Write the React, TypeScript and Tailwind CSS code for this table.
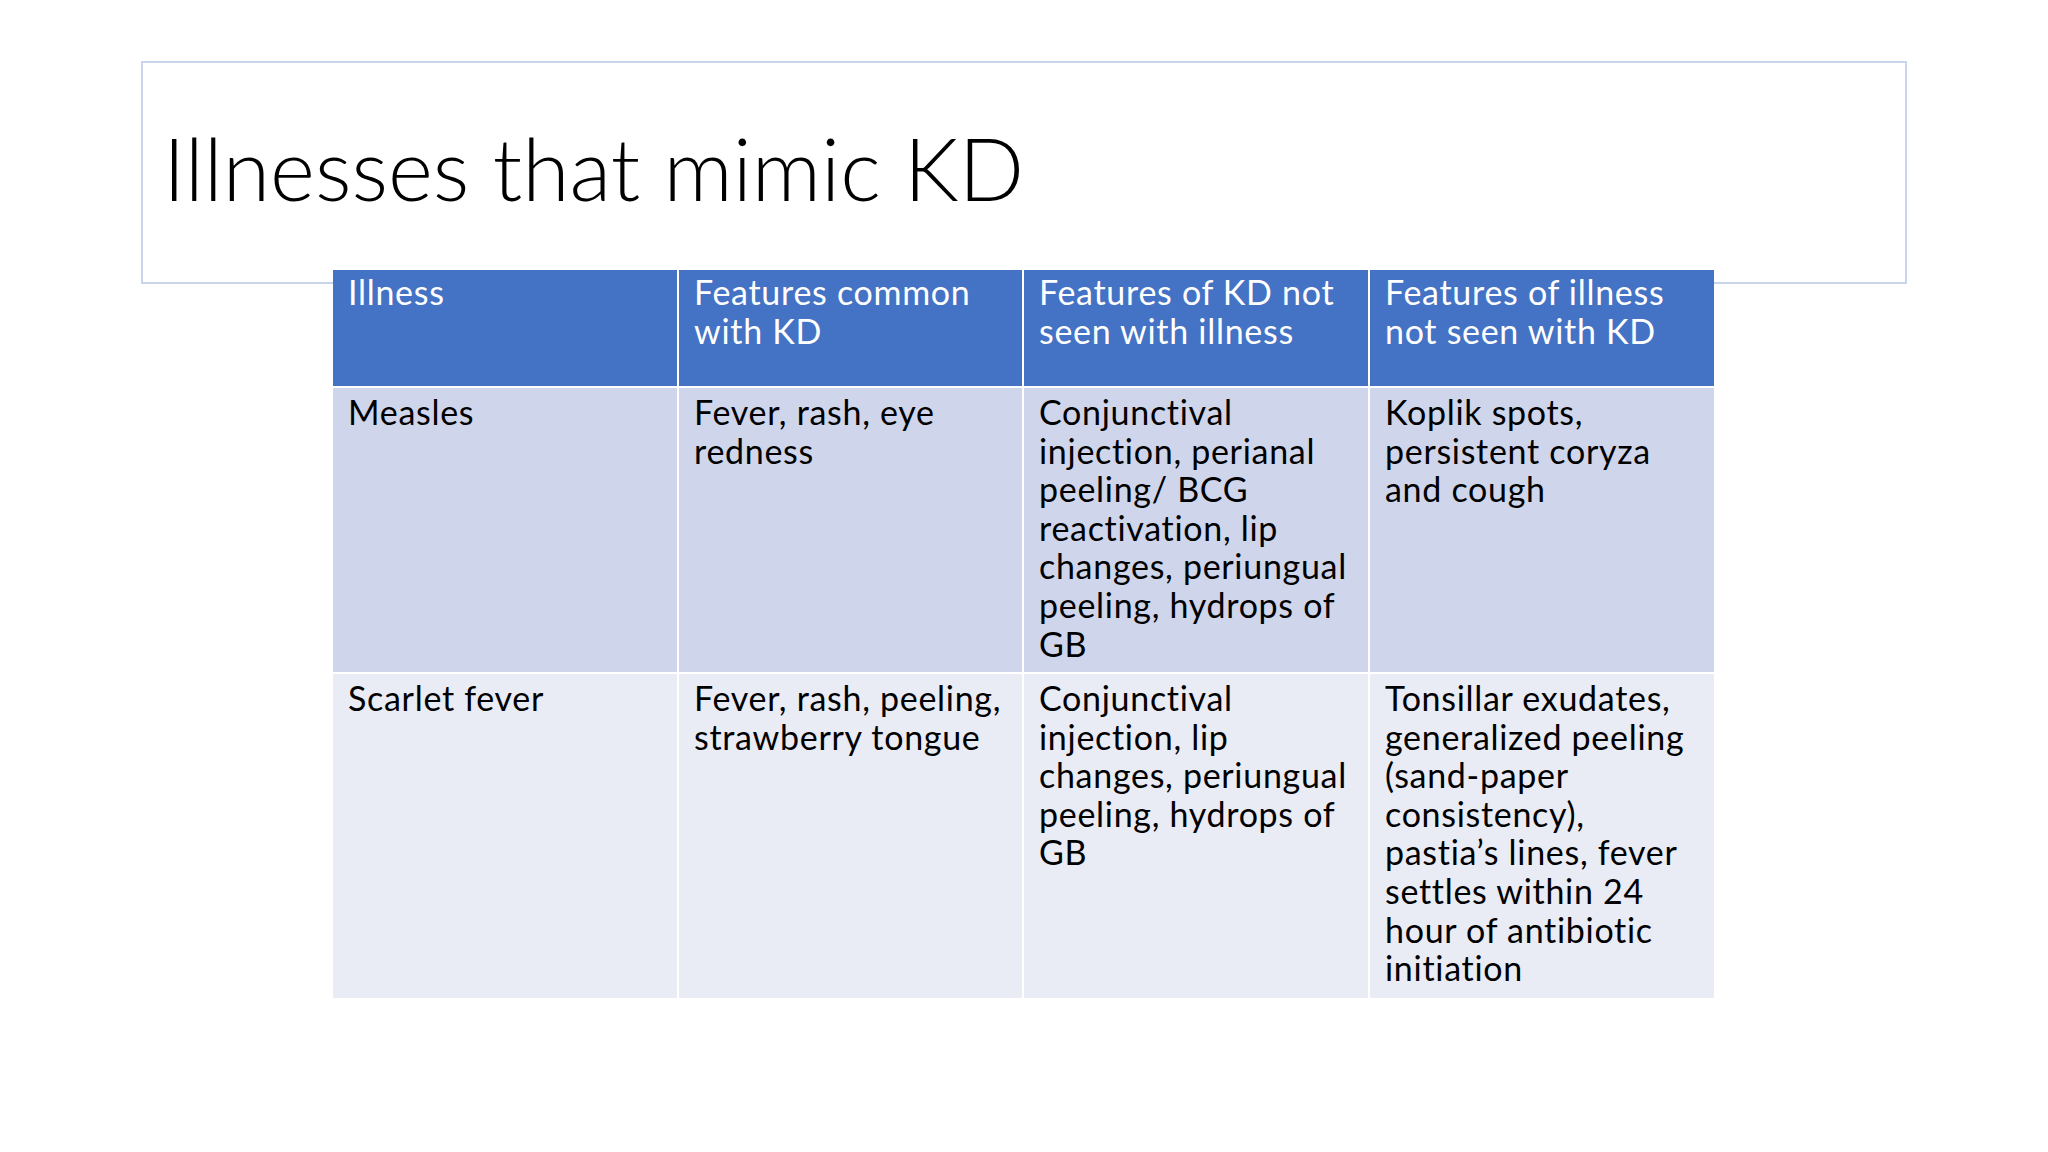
import React from 'react';

const header = [
  'Illness',
  'Features common with KD',
  'Features of KD not seen with illness',
  'Features of illness not seen with KD',
];

const rows = [
  {
    bg: 'bg-[#cfd5ea]',
    cells: [
      'Measles',
      'Fever, rash, eye redness',
      'Conjunctival injection, perianal peeling/ BCG reactivation, lip changes, periungual peeling, hydrops of GB',
      'Koplik spots, persistent coryza and cough',
    ],
  },
  {
    bg: 'bg-[#e9ebf5]',
    cells: [
      'Scarlet fever',
      'Fever, rash, peeling, strawberry tongue',
      'Conjunctival injection, lip changes, periungual peeling, hydrops of GB',
      'Tonsillar exudates, generalized peeling (sand-paper consistency), pastia\u2019s lines, fever settles within 24 hour of antibiotic initiation',
    ],
  },
];

export default function App() {
  return (
    <div className="w-[2048px] h-[1152px] bg-white overflow-hidden font-['Lato',sans-serif]">
      {/* title placeholder */}
      <div className="ml-[141px] mt-[61px] w-[1766px] h-[223px] border-2 border-[#c8d5ea] pl-[20px] pt-[62px]">
        <h1 className="text-[86px] leading-[1] font-light text-black">Illnesses that mimic KD</h1>
      </div>

      <div className="relative -mt-[14px] ml-[333px] w-[1381px] grid grid-cols-[344px_343px_344px_344px] grid-rows-[116px_284px_324px] gap-[2px] bg-white text-[34px] leading-[38.6px] tracking-[0.7px]">
        {header.map((h) => (
          <div key={h} className="bg-[#4472c4] text-white pl-[15px] pr-[6px] pt-[3px]">
            {h}
          </div>
        ))}
        {rows.map((r) =>
          r.cells.map((c, i) => (
            <div key={r.cells[0] + i} className={`${r.bg} text-black pl-[15px] pr-[12px] pt-[5px]`}>
              {c}
            </div>
          ))
        )}
      </div>
    </div>
  );
}
